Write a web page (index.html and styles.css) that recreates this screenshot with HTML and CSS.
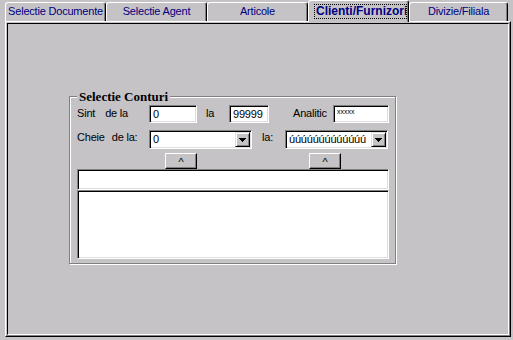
FILE: index.html
```html
<!DOCTYPE html>
<html>
<head>
    <title>Selectie Conturi</title>
    <link rel="stylesheet" href="styles.css">
</head>
<body>
    <div class="window">
        <div class="tabs">
            <div class="tab">Selectie Documente</div>
            <div class="tab">Selectie Agent</div>
            <div class="tab">Articole</div>
            <div class="tab tab-active"><span class="focus">Clienti/Furnizori</span></div>
            <div class="tab tab-last">Divizie/Filiala</div>
        </div>
        <div class="panel">
            <div class="page">
                <fieldset class="group">
                    <legend>Selectie Conturi</legend>
                    <div class="row row-1">
                        <label class="lbl lbl-first">Sint<span class="sp-sint">de la</span></label>
                        <div class="edit w48">0</div>
                        <label class="lbl lbl-la">la</label>
                        <div class="edit w40">99999</div>
                        <label class="lbl lbl-an">Analitic</label>
                        <div class="edit w56"><span class="mask">xxxxx</span></div>
                    </div>
                    <div class="row row-2">
                        <label class="lbl lbl-first">Cheie<span class="sp-cheie">de la:</span></label>
                        <div class="combo">
                            <span class="combo-text">0</span>
                            <span class="drop">
                                <svg width="7" height="4" viewBox="0 0 7 4" shape-rendering="crispEdges"><path d="M0 0h7v1H0zM1 1h5v1H1zM2 2h3v1H2zM3 3h1v1H3z" fill="#000"/></svg>
                            </span>
                        </div>
                        <label class="lbl lbl-la2">la:</label>
                        <div class="combo">
                            <span class="combo-text">úúúúúúúúúúúúú</span>
                            <span class="drop">
                                <svg width="7" height="4" viewBox="0 0 7 4" shape-rendering="crispEdges"><path d="M0 0h7v1H0zM1 1h5v1H1zM2 2h3v1H2zM3 3h1v1H3z" fill="#000"/></svg>
                            </span>
                        </div>
                    </div>
                    <div class="row row-3">
                        <button class="btn btn-a">^</button>
                        <button class="btn btn-b">^</button>
                    </div>
                    <div class="edit wide"></div>
                    <div class="edit list"></div>
                </fieldset>
            </div>
        </div>
    </div>
</body>
</html>
```
FILE: styles.css
```css
body {
    margin: 0;
    background-color: #c5c3c6;
    font-family: "Liberation Sans", Arial, sans-serif;
    font-size: 11px;
    letter-spacing: -0.2px;
    color: #000;
}
.window {
    width: 513px;
    height: 340px;
    overflow: hidden;
}

/* tab strip */
.tabs {
    display: flex;
    align-items: flex-end;
    height: 21px;
    padding-left: 5px;
}
.tab {
    box-sizing: border-box;
    width: 101px;
    height: 19px;
    border: 1px solid;
    border-bottom: 0;
    border-color: #fff #000 #000 #fff;
    border-radius: 3px 3px 0 0;
    box-shadow: inset -1px 0 0 #808080;
    color: #000080;
    text-align: center;
    line-height: 16px;
    white-space: nowrap;
    overflow: hidden;
}
.tab-active {
    position: relative;
    z-index: 1;
    height: 22px;
    margin-bottom: -1px;
    background-color: #c5c3c6;
    font-weight: bold;
    font-size: 12px;
    letter-spacing: 0;
    text-align: left;
}
.tab-last {
    width: 99px;
}
.focus {
    display: block;
    box-sizing: border-box;
    height: 15px;
    margin: 3px 1px 0 5px;
    padding-left: 1px;
    border: 1px dotted #000;
    line-height: 13px;
    overflow: hidden;
}

/* page frame */
.panel {
    box-sizing: border-box;
    width: 506px;
    height: 316px;
    margin-left: 5px;
    padding: 1px;
    border: 1px solid;
    border-color: #fff #000 #000 #fff;
    box-shadow: inset -1px -1px 0 #808080;
}
.page {
    box-sizing: border-box;
    height: 100%;
    padding: 66px 0 0 61px;
    border: 1px solid;
    border-color: #000 #fff #fff #000;
}

/* group box */
.group {
    box-sizing: border-box;
    width: 327px;
    min-width: 0;
    margin: 0;
    padding: 2px 6px 4px 7px;
    border: 1px solid #808080;
    box-shadow: inset 1px 1px 0 #fff, 1px 1px 0 #fff;
}
.group legend {
    padding: 0 2px;
    background-color: #c5c3c6;
    font: bold 13px/13px "Liberation Serif", "Times New Roman", serif;
    letter-spacing: 0;
}
.row {
    display: flex;
    height: 18px;
}
.row-2 {
    height: 19px;
    margin-top: 7px;
}
.row-2 .lbl {
    line-height: 14px;
}
.row-3 {
    height: 16px;
    margin-top: 4px;
}
.lbl {
    box-sizing: border-box;
    line-height: 16px;
    white-space: nowrap;
}
.lbl-first {
    width: 72px;
}
.sp-sint {
    margin-left: 10px;
}
.sp-cheie {
    margin-left: 7px;
}
.lbl-la {
    width: 32px;
    padding-left: 9px;
}
.lbl-an {
    width: 64px;
    padding-left: 24px;
}
.lbl-la2 {
    width: 33px;
    padding-left: 10px;
}

/* sunken fields */
.edit {
    box-sizing: border-box;
    height: 18px;
    padding: 0 3px;
    border: 1px solid;
    border-color: #808080 #fff #fff #808080;
    box-shadow: inset 1px 1px 0 #000, inset -1px -1px 0 #dfdfdf;
    background-color: #fff;
    line-height: 16px;
    white-space: nowrap;
    overflow: hidden;
}
.w48 { width: 48px; }
.w40 { width: 40px; }
.w56 { width: 56px; }
.mask {
    display: inline-block;
    font-size: 7px;
    line-height: 11px;
    letter-spacing: 0;
    vertical-align: top;
}
.wide {
    height: 21px;
}
.list {
    height: 69px;
}
.combo {
    box-sizing: border-box;
    display: flex;
    width: 103px;
    height: 19px;
    padding: 1px;
    border: 1px solid;
    border-color: #808080 #fff #fff #808080;
    box-shadow: inset 1px 1px 0 #000, inset -1px -1px 0 #dfdfdf;
    background-color: #fff;
}
.combo-text {
    flex: 1;
    padding-left: 2px;
    line-height: 14px;
    white-space: nowrap;
    overflow: hidden;
}
.drop {
    box-sizing: border-box;
    display: flex;
    align-items: center;
    justify-content: center;
    width: 15px;
    height: 15px;
    border: 1px solid;
    border-color: #dfdfdf #000 #000 #dfdfdf;
    box-shadow: inset 1px 1px 0 #fff, inset -1px -1px 0 #808080;
    background-color: #c5c3c6;
}
.drop svg {
    display: block;
}

/* push buttons */
.btn {
    box-sizing: border-box;
    width: 32px;
    height: 16px;
    margin: 0;
    padding: 1px 0 0;
    border: 1px solid;
    border-color: #fff #000 #000 #fff;
    border-radius: 0;
    box-shadow: inset -1px -1px 0 #808080;
    background-color: #c5c3c6;
    color: #000;
    font: 11px/12px "Liberation Sans", Arial, sans-serif;
    vertical-align: top;
}
.btn-a {
    margin-left: 88px;
}
.btn-b {
    margin-left: 112px;
}
```
